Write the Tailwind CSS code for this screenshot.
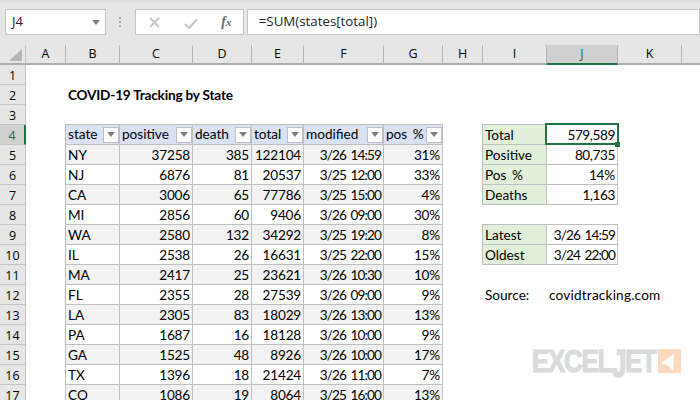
<!DOCTYPE html>
<html>
<head>
<meta charset="utf-8">
<script src="https://cdn.jsdelivr.net/npm/@tailwindcss/browser@4"></script>
</head>
<body class="m-0 bg-white">
<div class="relative w-[700px] h-[400px] overflow-hidden bg-white font-['Lato',sans-serif] text-[13.6px] text-black">
  <!-- toolbar -->
  <div class="h-[45px] bg-[#e6e6e6] bg-gradient-to-b from-[#dcdcdc] to-[#e6e6e6] to-[12%] flex items-start pt-[9px] pl-[5px] font-['Open_Sans',sans-serif] text-[13px] text-[#222]">
    <div class="w-[102px] h-[26px] bg-white border border-[#c4c4c4] flex items-center justify-between pl-[6px] pr-[5px]">
      <span>J4</span>
      <svg width="8" height="5" viewBox="0 0 8 5"><path d="M0 0h8L4 5z" fill="#7f7f7f"/></svg>
    </div>
    <div class="w-[30px] flex flex-col items-center gap-[2px] pt-[8px]">
      <span class="w-[2px] h-[2px] bg-[#a6a6a6]"></span><span class="w-[2px] h-[2px] bg-[#a6a6a6]"></span><span class="w-[2px] h-[2px] bg-[#a6a6a6]"></span>
    </div>
    <div class="w-[110px] h-[26px] bg-white border border-[#c4c4c4] flex items-center pl-[13px]">
      <svg width="11" height="11" viewBox="0 0 11 11" class="mr-[24px]"><path d="M1 1l9 9M10 1l-9 9" stroke="#c8c8c8" stroke-width="2" fill="none"/></svg>
      <svg width="14" height="11" viewBox="0 0 14 11" class="mr-[23px] mt-[2px]"><path d="M1 6l4 4L13 1.500" stroke="#c8c8c8" stroke-width="2.4" fill="none"/></svg>
      <span class="font-['Liberation_Serif',serif] italic font-bold text-[14px] text-[#6a6a6a] leading-none">f<span class="text-[11px]">x</span></span>
    </div>
    <div class="ml-[3px] w-[460px] h-[26px] bg-white border border-[#c4c4c4] flex items-center pl-[11px] text-[13.3px]">=SUM(states[total])</div>
  </div>

  <!-- sheet -->
  <div class="grid grid-cols-[26px_40px_54px_73px_59px_52px_80px_59px_40px_64px_71px_64px_18px] auto-rows-[20px] leading-[21px] whitespace-nowrap [word-spacing:2px]">
    <!-- column headers -->
    <div class="bg-[#e6e6e6] border-b-[2px] border-[#ababab] border-r border-r-[#c4c4c4] flex items-end justify-end pr-[3px] pb-[2px]"><svg width="13" height="12" viewBox="0 0 13 12"><path d="M13 0v12H0z" fill="#b5b5b5"/></svg></div>
    <div class="bg-[#e6e6e6] border-b-[2px] border-[#ababab] border-r border-r-[#b5b5b5] text-center font-['Open_Sans',sans-serif] text-[12.5px] leading-[18px]">A</div>
    <div class="bg-[#e6e6e6] border-b-[2px] border-[#ababab] border-r border-r-[#b5b5b5] text-center font-['Open_Sans',sans-serif] text-[12.5px] leading-[18px]">B</div>
    <div class="bg-[#e6e6e6] border-b-[2px] border-[#ababab] border-r border-r-[#b5b5b5] text-center font-['Open_Sans',sans-serif] text-[12.5px] leading-[18px]">C</div>
    <div class="bg-[#e6e6e6] border-b-[2px] border-[#ababab] border-r border-r-[#b5b5b5] text-center font-['Open_Sans',sans-serif] text-[12.5px] leading-[18px]">D</div>
    <div class="bg-[#e6e6e6] border-b-[2px] border-[#ababab] border-r border-r-[#b5b5b5] text-center font-['Open_Sans',sans-serif] text-[12.5px] leading-[18px]">E</div>
    <div class="bg-[#e6e6e6] border-b-[2px] border-[#ababab] border-r border-r-[#b5b5b5] text-center font-['Open_Sans',sans-serif] text-[12.5px] leading-[18px]">F</div>
    <div class="bg-[#e6e6e6] border-b-[2px] border-[#ababab] border-r border-r-[#b5b5b5] text-center font-['Open_Sans',sans-serif] text-[12.5px] leading-[18px]">G</div>
    <div class="bg-[#e6e6e6] border-b-[2px] border-[#ababab] border-r border-r-[#b5b5b5] text-center font-['Open_Sans',sans-serif] text-[12.5px] leading-[18px]">H</div>
    <div class="bg-[#e6e6e6] border-b-[2px] border-[#ababab] border-r border-r-[#b5b5b5] text-center font-['Open_Sans',sans-serif] text-[12.5px] leading-[18px]">I</div>
    <div class="bg-[#d0d0d0] border-b-[2px] border-[#217346] border-r border-r-[#b5b5b5] text-center font-['Open_Sans',sans-serif] text-[12.5px] leading-[18px] text-[#1f6b42]">J</div>
    <div class="bg-[#e6e6e6] border-b-[2px] border-[#ababab] border-r border-r-[#b5b5b5] text-center font-['Open_Sans',sans-serif] text-[12.5px] leading-[18px]">K</div>
    <div class="bg-[#e6e6e6] border-b-[2px] border-[#ababab]"></div>

    <div class="col-start-1 bg-[#e6e6e6] border-r border-b border-[#c4c4c4] text-center font-['Open_Sans',sans-serif] text-[12.5px]">1</div>
    <div class="col-start-1 bg-[#e6e6e6] border-r border-b border-[#c4c4c4] text-center font-['Open_Sans',sans-serif] text-[12.5px]">2</div>
    <div class="col-start-3 col-span-5 pl-[2px] font-bold tracking-[-0.2px] [word-spacing:0]">COVID-19 Tracking by State</div>
    <div class="col-start-1 bg-[#e6e6e6] border-r border-b border-[#c4c4c4] text-center font-['Open_Sans',sans-serif] text-[12.5px]">3</div>

    <!-- row 4 -->
    <div class="col-start-1 bg-[#d0d0d0] border-r-[2px] border-r-[#217346] border-b border-[#c4c4c4] text-center font-['Open_Sans',sans-serif] text-[12.5px] text-[#1f6b42]">4</div>
    <div class="col-start-3 -ml-px -mt-px bg-[#d9e1f2] border border-[#bfbfbf] flex items-center justify-between pl-[2px]">state<span class="w-[16px] h-[16px] bg-white border border-[#bfbfbf] flex items-center justify-center"><svg width="8" height="5" viewBox="0 0 8 5"><path d="M0 0h8L4 5z" fill="#7f7f7f"/></svg></span></div>
    <div class="-ml-px -mt-px bg-[#d9e1f2] border border-[#bfbfbf] flex items-center justify-between pl-[2px]">positive<span class="w-[16px] h-[16px] bg-white border border-[#bfbfbf] flex items-center justify-center"><svg width="8" height="5" viewBox="0 0 8 5"><path d="M0 0h8L4 5z" fill="#7f7f7f"/></svg></span></div>
    <div class="-ml-px -mt-px bg-[#d9e1f2] border border-[#bfbfbf] flex items-center justify-between pl-[2px]">death<span class="w-[16px] h-[16px] bg-white border border-[#bfbfbf] flex items-center justify-center"><svg width="8" height="5" viewBox="0 0 8 5"><path d="M0 0h8L4 5z" fill="#7f7f7f"/></svg></span></div>
    <div class="-ml-px -mt-px bg-[#d9e1f2] border border-[#bfbfbf] flex items-center justify-between pl-[2px]">total<span class="w-[16px] h-[16px] bg-white border border-[#bfbfbf] flex items-center justify-center"><svg width="8" height="5" viewBox="0 0 8 5"><path d="M0 0h8L4 5z" fill="#7f7f7f"/></svg></span></div>
    <div class="-ml-px -mt-px bg-[#d9e1f2] border border-[#bfbfbf] flex items-center justify-between pl-[2px]">modified<span class="w-[16px] h-[16px] bg-white border border-[#bfbfbf] flex items-center justify-center"><svg width="8" height="5" viewBox="0 0 8 5"><path d="M0 0h8L4 5z" fill="#7f7f7f"/></svg></span></div>
    <div class="-ml-px -mt-px bg-[#d9e1f2] border border-[#bfbfbf] flex items-center justify-between pl-[2px]">pos %<span class="w-[16px] h-[16px] bg-white border border-[#bfbfbf] flex items-center justify-center"><svg width="8" height="5" viewBox="0 0 8 5"><path d="M0 0h8L4 5z" fill="#7f7f7f"/></svg></span></div>
    <div class="col-start-10 -ml-px -mt-px bg-[#e2efda] border border-[#bfbfbf] pl-[2px]">Total</div>
    <div class="relative bg-white text-right pr-[2px] border-[2px] border-[#217346] -ml-[2px] -mr-px -mt-[2px] z-10 leading-[20px] tracking-[-0.4px]">579,589<span class="absolute -right-[3px] -bottom-[4px] w-[5px] h-[5px] bg-[#217346]"></span></div>

    <!-- row 5 -->
    <div class="col-start-1 bg-[#e6e6e6] border-r border-b border-[#c4c4c4] text-center font-['Open_Sans',sans-serif] text-[12.5px]">5</div>
    <div class="col-start-3 -ml-px bg-[#f2f2f2] border-x border-b border-[#bfbfbf] pl-[2px]">NY</div>
    <div class="-ml-px bg-[#f2f2f2] border-x border-b border-[#bfbfbf] text-right pr-[2px] tracking-[-0.2px]">37258</div>
    <div class="-ml-px bg-[#f2f2f2] border-x border-b border-[#bfbfbf] text-right pr-[2px] tracking-[-0.2px]">385</div>
    <div class="-ml-px bg-[#f2f2f2] border-x border-b border-[#bfbfbf] text-right pr-[2px] tracking-[-0.2px]">122104</div>
    <div class="-ml-px bg-[#f2f2f2] border-x border-b border-[#bfbfbf] text-right pr-[2px] tracking-[-0.9px]">3/26 14:59</div>
    <div class="-ml-px bg-[#f2f2f2] border-x border-b border-[#bfbfbf] text-right pr-[2px] tracking-[-0.2px]">31%</div>
    <div class="col-start-10 -ml-px bg-[#e2efda] border-x border-b border-[#bfbfbf] pl-[2px]">Positive</div>
    <div class="-ml-px bg-white border-x border-b border-[#bfbfbf] text-right pr-[2px] tracking-[-0.4px]">80,735</div>

    <!-- row 6 -->
    <div class="col-start-1 bg-[#e6e6e6] border-r border-b border-[#c4c4c4] text-center font-['Open_Sans',sans-serif] text-[12.5px]">6</div>
    <div class="col-start-3 -ml-px border-x border-b border-[#bfbfbf] pl-[2px]">NJ</div>
    <div class="-ml-px border-x border-b border-[#bfbfbf] text-right pr-[2px] tracking-[-0.2px]">6876</div>
    <div class="-ml-px border-x border-b border-[#bfbfbf] text-right pr-[2px] tracking-[-0.2px]">81</div>
    <div class="-ml-px border-x border-b border-[#bfbfbf] text-right pr-[2px] tracking-[-0.2px]">20537</div>
    <div class="-ml-px border-x border-b border-[#bfbfbf] text-right pr-[2px] tracking-[-0.9px]">3/25 12:00</div>
    <div class="-ml-px border-x border-b border-[#bfbfbf] text-right pr-[2px] tracking-[-0.2px]">33%</div>
    <div class="col-start-10 -ml-px bg-[#e2efda] border-x border-b border-[#bfbfbf] pl-[2px]">Pos %</div>
    <div class="-ml-px bg-white border-x border-b border-[#bfbfbf] text-right pr-[2px] tracking-[-0.2px]">14%</div>

    <!-- row 7 -->
    <div class="col-start-1 bg-[#e6e6e6] border-r border-b border-[#c4c4c4] text-center font-['Open_Sans',sans-serif] text-[12.5px]">7</div>
    <div class="col-start-3 -ml-px bg-[#f2f2f2] border-x border-b border-[#bfbfbf] pl-[2px]">CA</div>
    <div class="-ml-px bg-[#f2f2f2] border-x border-b border-[#bfbfbf] text-right pr-[2px] tracking-[-0.2px]">3006</div>
    <div class="-ml-px bg-[#f2f2f2] border-x border-b border-[#bfbfbf] text-right pr-[2px] tracking-[-0.2px]">65</div>
    <div class="-ml-px bg-[#f2f2f2] border-x border-b border-[#bfbfbf] text-right pr-[2px] tracking-[-0.2px]">77786</div>
    <div class="-ml-px bg-[#f2f2f2] border-x border-b border-[#bfbfbf] text-right pr-[2px] tracking-[-0.9px]">3/25 15:00</div>
    <div class="-ml-px bg-[#f2f2f2] border-x border-b border-[#bfbfbf] text-right pr-[2px] tracking-[-0.2px]">4%</div>
    <div class="col-start-10 -ml-px bg-[#e2efda] border-x border-b border-[#bfbfbf] pl-[2px]">Deaths</div>
    <div class="-ml-px bg-white border-x border-b border-[#bfbfbf] text-right pr-[2px] tracking-[-0.4px]">1,163</div>

    <!-- row 8 -->
    <div class="col-start-1 bg-[#e6e6e6] border-r border-b border-[#c4c4c4] text-center font-['Open_Sans',sans-serif] text-[12.5px]">8</div>
    <div class="col-start-3 -ml-px border-x border-b border-[#bfbfbf] pl-[2px]">MI</div>
    <div class="-ml-px border-x border-b border-[#bfbfbf] text-right pr-[2px] tracking-[-0.2px]">2856</div>
    <div class="-ml-px border-x border-b border-[#bfbfbf] text-right pr-[2px] tracking-[-0.2px]">60</div>
    <div class="-ml-px border-x border-b border-[#bfbfbf] text-right pr-[2px] tracking-[-0.2px]">9406</div>
    <div class="-ml-px border-x border-b border-[#bfbfbf] text-right pr-[2px] tracking-[-0.9px]">3/26 09:00</div>
    <div class="-ml-px border-x border-b border-[#bfbfbf] text-right pr-[2px] tracking-[-0.2px]">30%</div>

    <!-- row 9 -->
    <div class="col-start-1 bg-[#e6e6e6] border-r border-b border-[#c4c4c4] text-center font-['Open_Sans',sans-serif] text-[12.5px]">9</div>
    <div class="col-start-3 -ml-px bg-[#f2f2f2] border-x border-b border-[#bfbfbf] pl-[2px]">WA</div>
    <div class="-ml-px bg-[#f2f2f2] border-x border-b border-[#bfbfbf] text-right pr-[2px] tracking-[-0.2px]">2580</div>
    <div class="-ml-px bg-[#f2f2f2] border-x border-b border-[#bfbfbf] text-right pr-[2px] tracking-[-0.2px]">132</div>
    <div class="-ml-px bg-[#f2f2f2] border-x border-b border-[#bfbfbf] text-right pr-[2px] tracking-[-0.2px]">34292</div>
    <div class="-ml-px bg-[#f2f2f2] border-x border-b border-[#bfbfbf] text-right pr-[2px] tracking-[-0.9px]">3/25 19:20</div>
    <div class="-ml-px bg-[#f2f2f2] border-x border-b border-[#bfbfbf] text-right pr-[2px] tracking-[-0.2px]">8%</div>
    <div class="col-start-10 -ml-px -mt-px bg-[#e2efda] border border-[#bfbfbf] pl-[2px]">Latest</div>
    <div class="-ml-px -mt-px bg-white border border-[#bfbfbf] text-right pr-[2px] tracking-[-0.9px]">3/26 14:59</div>

    <!-- row 10 -->
    <div class="col-start-1 bg-[#e6e6e6] border-r border-b border-[#c4c4c4] text-center font-['Open_Sans',sans-serif] text-[12.5px]">10</div>
    <div class="col-start-3 -ml-px border-x border-b border-[#bfbfbf] pl-[2px]">IL</div>
    <div class="-ml-px border-x border-b border-[#bfbfbf] text-right pr-[2px] tracking-[-0.2px]">2538</div>
    <div class="-ml-px border-x border-b border-[#bfbfbf] text-right pr-[2px] tracking-[-0.2px]">26</div>
    <div class="-ml-px border-x border-b border-[#bfbfbf] text-right pr-[2px] tracking-[-0.2px]">16631</div>
    <div class="-ml-px border-x border-b border-[#bfbfbf] text-right pr-[2px] tracking-[-0.9px]">3/25 22:00</div>
    <div class="-ml-px border-x border-b border-[#bfbfbf] text-right pr-[2px] tracking-[-0.2px]">15%</div>
    <div class="col-start-10 -ml-px bg-[#e2efda] border-x border-b border-[#bfbfbf] pl-[2px]">Oldest</div>
    <div class="-ml-px bg-white border-x border-b border-[#bfbfbf] text-right pr-[2px] tracking-[-0.9px]">3/24 22:00</div>

    <!-- row 11 -->
    <div class="col-start-1 bg-[#e6e6e6] border-r border-b border-[#c4c4c4] text-center font-['Open_Sans',sans-serif] text-[12.5px]">11</div>
    <div class="col-start-3 -ml-px bg-[#f2f2f2] border-x border-b border-[#bfbfbf] pl-[2px]">MA</div>
    <div class="-ml-px bg-[#f2f2f2] border-x border-b border-[#bfbfbf] text-right pr-[2px] tracking-[-0.2px]">2417</div>
    <div class="-ml-px bg-[#f2f2f2] border-x border-b border-[#bfbfbf] text-right pr-[2px] tracking-[-0.2px]">25</div>
    <div class="-ml-px bg-[#f2f2f2] border-x border-b border-[#bfbfbf] text-right pr-[2px] tracking-[-0.2px]">23621</div>
    <div class="-ml-px bg-[#f2f2f2] border-x border-b border-[#bfbfbf] text-right pr-[2px] tracking-[-0.9px]">3/26 10:30</div>
    <div class="-ml-px bg-[#f2f2f2] border-x border-b border-[#bfbfbf] text-right pr-[2px] tracking-[-0.2px]">10%</div>

    <!-- row 12 -->
    <div class="col-start-1 bg-[#e6e6e6] border-r border-b border-[#c4c4c4] text-center font-['Open_Sans',sans-serif] text-[12.5px]">12</div>
    <div class="col-start-3 -ml-px border-x border-b border-[#bfbfbf] pl-[2px]">FL</div>
    <div class="-ml-px border-x border-b border-[#bfbfbf] text-right pr-[2px] tracking-[-0.2px]">2355</div>
    <div class="-ml-px border-x border-b border-[#bfbfbf] text-right pr-[2px] tracking-[-0.2px]">28</div>
    <div class="-ml-px border-x border-b border-[#bfbfbf] text-right pr-[2px] tracking-[-0.2px]">27539</div>
    <div class="-ml-px border-x border-b border-[#bfbfbf] text-right pr-[2px] tracking-[-0.9px]">3/26 09:00</div>
    <div class="-ml-px border-x border-b border-[#bfbfbf] text-right pr-[2px] tracking-[-0.2px]">9%</div>
    <div class="col-start-10 pl-[2px]">Source:</div>
    <div class="col-span-2 pl-[2px] tracking-[0.2px]">covidtracking.com</div>

    <!-- row 13 -->
    <div class="col-start-1 bg-[#e6e6e6] border-r border-b border-[#c4c4c4] text-center font-['Open_Sans',sans-serif] text-[12.5px]">13</div>
    <div class="col-start-3 -ml-px bg-[#f2f2f2] border-x border-b border-[#bfbfbf] pl-[2px]">LA</div>
    <div class="-ml-px bg-[#f2f2f2] border-x border-b border-[#bfbfbf] text-right pr-[2px] tracking-[-0.2px]">2305</div>
    <div class="-ml-px bg-[#f2f2f2] border-x border-b border-[#bfbfbf] text-right pr-[2px] tracking-[-0.2px]">83</div>
    <div class="-ml-px bg-[#f2f2f2] border-x border-b border-[#bfbfbf] text-right pr-[2px] tracking-[-0.2px]">18029</div>
    <div class="-ml-px bg-[#f2f2f2] border-x border-b border-[#bfbfbf] text-right pr-[2px] tracking-[-0.9px]">3/26 13:00</div>
    <div class="-ml-px bg-[#f2f2f2] border-x border-b border-[#bfbfbf] text-right pr-[2px] tracking-[-0.2px]">13%</div>

    <!-- row 14 -->
    <div class="col-start-1 bg-[#e6e6e6] border-r border-b border-[#c4c4c4] text-center font-['Open_Sans',sans-serif] text-[12.5px]">14</div>
    <div class="col-start-3 -ml-px border-x border-b border-[#bfbfbf] pl-[2px]">PA</div>
    <div class="-ml-px border-x border-b border-[#bfbfbf] text-right pr-[2px] tracking-[-0.2px]">1687</div>
    <div class="-ml-px border-x border-b border-[#bfbfbf] text-right pr-[2px] tracking-[-0.2px]">16</div>
    <div class="-ml-px border-x border-b border-[#bfbfbf] text-right pr-[2px] tracking-[-0.2px]">18128</div>
    <div class="-ml-px border-x border-b border-[#bfbfbf] text-right pr-[2px] tracking-[-0.9px]">3/26 10:00</div>
    <div class="-ml-px border-x border-b border-[#bfbfbf] text-right pr-[2px] tracking-[-0.2px]">9%</div>

    <!-- row 15 -->
    <div class="col-start-1 bg-[#e6e6e6] border-r border-b border-[#c4c4c4] text-center font-['Open_Sans',sans-serif] text-[12.5px]">15</div>
    <div class="col-start-3 -ml-px bg-[#f2f2f2] border-x border-b border-[#bfbfbf] pl-[2px]">GA</div>
    <div class="-ml-px bg-[#f2f2f2] border-x border-b border-[#bfbfbf] text-right pr-[2px] tracking-[-0.2px]">1525</div>
    <div class="-ml-px bg-[#f2f2f2] border-x border-b border-[#bfbfbf] text-right pr-[2px] tracking-[-0.2px]">48</div>
    <div class="-ml-px bg-[#f2f2f2] border-x border-b border-[#bfbfbf] text-right pr-[2px] tracking-[-0.2px]">8926</div>
    <div class="-ml-px bg-[#f2f2f2] border-x border-b border-[#bfbfbf] text-right pr-[2px] tracking-[-0.9px]">3/26 10:00</div>
    <div class="-ml-px bg-[#f2f2f2] border-x border-b border-[#bfbfbf] text-right pr-[2px] tracking-[-0.2px]">17%</div>

    <!-- row 16 -->
    <div class="col-start-1 bg-[#e6e6e6] border-r border-b border-[#c4c4c4] text-center font-['Open_Sans',sans-serif] text-[12.5px]">16</div>
    <div class="col-start-3 -ml-px border-x border-b border-[#bfbfbf] pl-[2px]">TX</div>
    <div class="-ml-px border-x border-b border-[#bfbfbf] text-right pr-[2px] tracking-[-0.2px]">1396</div>
    <div class="-ml-px border-x border-b border-[#bfbfbf] text-right pr-[2px] tracking-[-0.2px]">18</div>
    <div class="-ml-px border-x border-b border-[#bfbfbf] text-right pr-[2px] tracking-[-0.2px]">21424</div>
    <div class="-ml-px border-x border-b border-[#bfbfbf] text-right pr-[2px] tracking-[-0.9px]">3/26 11:00</div>
    <div class="-ml-px border-x border-b border-[#bfbfbf] text-right pr-[2px] tracking-[-0.2px]">7%</div>

    <!-- row 17 -->
    <div class="col-start-1 bg-[#e6e6e6] border-r border-b border-[#c4c4c4] text-center font-['Open_Sans',sans-serif] text-[12.5px]">17</div>
    <div class="col-start-3 -ml-px bg-[#f2f2f2] border-x border-b border-[#bfbfbf] pl-[2px]">CO</div>
    <div class="-ml-px bg-[#f2f2f2] border-x border-b border-[#bfbfbf] text-right pr-[2px] tracking-[-0.2px]">1086</div>
    <div class="-ml-px bg-[#f2f2f2] border-x border-b border-[#bfbfbf] text-right pr-[2px] tracking-[-0.2px]">19</div>
    <div class="-ml-px bg-[#f2f2f2] border-x border-b border-[#bfbfbf] text-right pr-[2px] tracking-[-0.2px]">8064</div>
    <div class="-ml-px bg-[#f2f2f2] border-x border-b border-[#bfbfbf] text-right pr-[2px] tracking-[-0.9px]">3/25 16:00</div>
    <div class="-ml-px bg-[#f2f2f2] border-x border-b border-[#bfbfbf] text-right pr-[2px] tracking-[-0.2px]">13%</div>
  </div>

  <!-- watermark logo -->
  <div class="absolute left-[532px] top-[345px] flex items-start">
    <div class="w-[126px] h-[34px]">
      <div class="w-[160px] whitespace-nowrap origin-left scale-x-[0.81] font-['Liberation_Sans',sans-serif] font-bold text-[32px] leading-[32px] tracking-[-1.6px] text-[#d9dada] [-webkit-text-stroke:1.2px_#d9dada]">EXCEL<span class="inline-block origin-top scale-y-[1.2]">J</span>ET</div>
    </div>
    <svg width="23" height="24" viewBox="0 0 23 24" class="mt-[4px]"><rect width="23" height="24" fill="#fbd9bf"/><path d="M16 5L3 14l8 3 4 5z" fill="#fff"/></svg>
  </div>
</div>
</body>
</html>
